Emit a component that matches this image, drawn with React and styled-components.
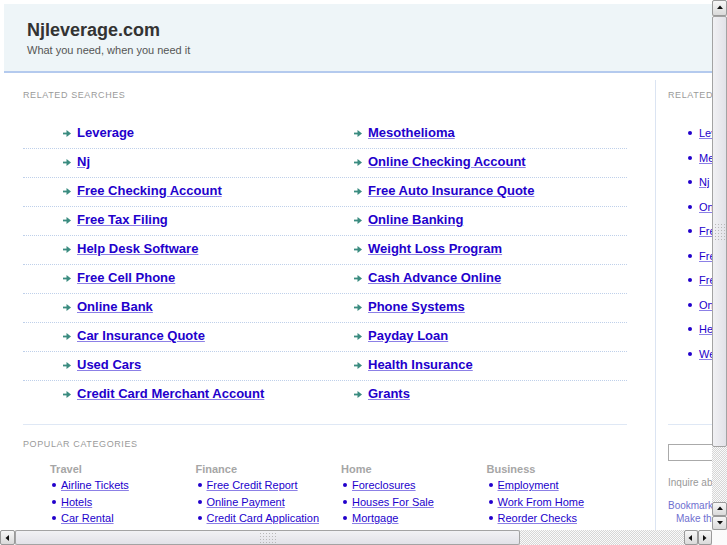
import React from 'react'
import styled, { createGlobalStyle } from 'styled-components'

const Global = createGlobalStyle`
    html, body { margin:0; padding:0; background:#fff; }
    body { font-family:"Liberation Sans", Arial, sans-serif; }
`;

const related = [
    ['Leverage', 'Mesothelioma'],
    ['Nj', 'Online Checking Account'],
    ['Free Checking Account', 'Free Auto Insurance Quote'],
    ['Free Tax Filing', 'Online Banking'],
    ['Help Desk Software', 'Weight Loss Program'],
    ['Free Cell Phone', 'Cash Advance Online'],
    ['Online Bank', 'Phone Systems'],
    ['Car Insurance Quote', 'Payday Loan'],
    ['Used Cars', 'Health Insurance'],
    ['Credit Card Merchant Account', 'Grants'],
];

const sideLinks = ['Leverage', 'Mesothelioma', 'Nj', 'Online Checking Account', 'Free Checking Account',
    'Free Auto Insurance Quote', 'Free Tax Filing', 'Online Banking', 'Help Desk Software', 'Weight Loss Program'];

const categories = [
    { title: 'Travel', links: ['Airline Tickets', 'Hotels', 'Car Rental'] },
    { title: 'Finance', links: ['Free Credit Report', 'Online Payment', 'Credit Card Application'] },
    { title: 'Home', links: ['Foreclosures', 'Houses For Sale', 'Mortgage'] },
    { title: 'Business', links: ['Employment', 'Work From Home', 'Reorder Checks'] },
];

const Frame = styled.div`
    width:727px;
    height:545px;
    display:grid;
    grid-template-columns:712px 15px;
    grid-template-rows:530px 15px;
    overflow:hidden;
`;

const Viewport = styled.div`
    overflow:hidden;
`;

const Page = styled.div`
    width:1000px;
`;

const Header = styled.header`
    margin:4px 0 0 4px;
    height:52px;
    padding:15px 0 0 23px;
    background:#eef5f8;
    border-bottom:2px solid #b4caee;
`;

const Title = styled.h1`
    margin:0;
    font-size:18px;
    line-height:22px;
    font-weight:bold;
    color:#333;
`;

const Tagline = styled.p`
    margin:3px 0 0;
    font-size:11px;
    line-height:13px;
    color:#555;
`;

const Main = styled.div`
    display:flex;
    margin-top:7px;
    padding-left:23px;
`;

const LeftCol = styled.div`
    width:604px;
    flex:none;
`;

const Divider = styled.div`
    margin-left:28px;
    width:0;
    border-left:1px solid #dbe4f2;
    align-self:stretch;
    min-height:460px;
`;

const RightCol = styled.div`
    padding-left:12px;
    width:240px;
`;

const Block = styled.div`
    height:${({ $h }) => $h}px;
    border-bottom:1px solid #dfe8f5;
    padding-top:10px;
    box-sizing:border-box;
`;

const Label = styled.div`
    font-size:9px;
    line-height:11px;
    letter-spacing:0.6px;
    color:#9a9a9a;
    text-transform:uppercase;
`;

const RelatedList = styled.div`
    margin-top:19px;
`;

const Row = styled.div`
    display:grid;
    grid-template-columns:291px 1fr;
    height:29px;
    box-sizing:border-box;
    border-bottom:${({ $last }) => ($last ? 'none' : '1px dotted #bfd0ea')};
`;

const Cell = styled.div`
    display:flex;
    align-items:center;
    height:16px;
    margin-top:5px;
    padding-left:40px;
    gap:6px;
`;

const BigLink = styled.a`
    font-size:13px;
    font-weight:bold;
    line-height:16px;
    color:#2200cc;
    text-decoration:${({ $plain }) => ($plain ? 'none' : 'underline')};
    text-decoration-color:#8c80e6;
    white-space:nowrap;
`;

const SideList = styled.ul`
    list-style:none;
    margin:20px 0 0;
    padding:0 0 0 20px;
`;

const SideItem = styled.li`
    display:flex;
    align-items:center;
    height:24.5px;
    gap:7px;
    white-space:nowrap;
`;

const Dot = styled.span`
    width:4px;
    height:4px;
    border-radius:50%;
    background:#2200cc;
    flex:none;
`;

const SmallLink = styled.a`
    font-size:11px;
    line-height:14px;
    color:#2200cc;
    text-decoration:underline;
    text-decoration-color:#8c80e6;
    white-space:nowrap;
`;

const Popular = styled.div`
    padding-top:14px;
`;

const CatGrid = styled.div`
    display:grid;
    grid-template-columns:repeat(4, 145.5px);
    margin:12px 0 0 27px;
`;

const CatTitle = styled.div`
    font-size:11px;
    font-weight:bold;
    line-height:14px;
    color:#a6a6a6;
    margin-bottom:1px;
`;

const CatItem = styled.div`
    display:flex;
    align-items:center;
    gap:5px;
    height:16.5px;
    padding-left:2px;
`;

const SearchBox = styled.input`
    display:block;
    margin-top:19px;
    width:180px;
    height:17px;
    box-sizing:border-box;
    border:1px solid #aaa;
    padding:0;
`;

const Note = styled.div`
    margin-top:15px;
    font-size:10px;
    line-height:13px;
    color:#999;
    white-space:nowrap;
`;

const Bookmark = styled.div`
    font-size:10px;
    line-height:13px;
    color:#6f6fd0;
    white-space:nowrap;
    padding-left:${({ $indent }) => ($indent ? 8 : 0)}px;
    margin-top:${({ $indent }) => ($indent ? 0 : 10)}px;
`;

/* scrollbars */
const VBar = styled.div`
    display:flex;
    flex-direction:column;
    background:repeating-conic-gradient(#d6d6d6 0 25%, #fafafa 0 50%) 0 0/2px 2px;
`;

const HBar = styled.div`
    display:flex;
    background:repeating-conic-gradient(#d6d6d6 0 25%, #fafafa 0 50%) 0 0/2px 2px;
`;

const Corner = styled.div`
    background:#fbfbfb;
`;

const Btn = styled.div`
    flex:none;
    width:${({ $w }) => $w}px;
    height:${({ $h }) => $h}px;
    box-sizing:border-box;
    border:1px solid #9a9a9a;
    border-radius:2px;
    background:linear-gradient(#f7f7f7, #dadada);
    display:flex;
    align-items:center;
    justify-content:center;
`;

const Thumb = styled.div`
    flex:none;
    box-sizing:border-box;
    border:1px solid #a3a3a3;
    border-radius:2px;
    background:${({ $vertical }) => ($vertical ? 'linear-gradient(90deg, #f1f1f4, #e2e2e8)' : 'linear-gradient(#f1f1f4, #e2e2e8)')};
    width:${({ $w }) => $w};
    height:${({ $h }) => $h};
    display:flex;
    align-items:center;
    justify-content:center;
`;

const Grip = styled.div`
    width:${({ $w }) => $w}px;
    height:${({ $h }) => $h}px;
    background:radial-gradient(circle, #b8b8b8 0.8px, transparent 1px) 0 0/3px 3px;
`;

const Spacer = styled.div`
    flex:1;
`;

const Arrow = ({ dir }) => {
    const pts = {
        up: '1,5 4,1.5 7,5',
        down: '1,2 4,5.5 7,2',
        left: '5,1 1.5,4 5,7',
        right: '2,1 5.5,4 2,7',
    }[dir];
    return (
        <svg width="8" height="8" viewBox="0 0 8 8">
            <polygon points={pts} fill="#111" />
        </svg>
    );
};

const GoArrow = () => (
    <svg width="8" height="7" viewBox="0 0 8 7" style={{ flex: 'none' }}>
        <rect x="0" y="2.6" width="4.5" height="1.8" fill="#3b8c80" />
        <polygon points="3.5,0 8,3.5 3.5,7" fill="#3b8c80" />
    </svg>
);

export default function App() {
    return (
        <Frame>
            <Global />
            <Viewport>
                <Page>
                    <Header>
                        <Title>Njleverage.com</Title>
                        <Tagline>What you need, when you need it</Tagline>
                    </Header>
                    <Main>
                        <LeftCol>
                            <Block $h={345}>
                                <Label>Related Searches</Label>
                                <RelatedList>
                                    {related.map(([a, b], i) =>
                                        <Row key={a} $last={i === related.length - 1}>
                                            <Cell><GoArrow /><BigLink href="#" $plain={i === 0}>{a}</BigLink></Cell>
                                            <Cell><GoArrow /><BigLink href="#">{b}</BigLink></Cell>
                                        </Row>
                                    )}
                                </RelatedList>
                            </Block>
                            <Popular>
                                <Label>Popular Categories</Label>
                                <CatGrid>
                                    {categories.map(cat =>
                                        <div key={cat.title}>
                                            <CatTitle>{cat.title}</CatTitle>
                                            {cat.links.map(l =>
                                                <CatItem key={l}><Dot /><SmallLink href="#">{l}</SmallLink></CatItem>
                                            )}
                                        </div>
                                    )}
                                </CatGrid>
                            </Popular>
                        </LeftCol>
                        <Divider />
                        <RightCol>
                            <Block $h={345}>
                                <Label>Related Searches</Label>
                                <SideList>
                                    {sideLinks.map(l =>
                                        <SideItem key={l}><Dot /><SmallLink href="#">{l}</SmallLink></SideItem>
                                    )}
                                </SideList>
                            </Block>
                            <SearchBox type="text" />
                            <Note>Inquire about this domain</Note>
                            <Bookmark>Bookmark this page</Bookmark>
                            <Bookmark $indent>Make this your homepage</Bookmark>
                        </RightCol>
                    </Main>
                </Page>
            </Viewport>
            <VBar>
                <Btn $w={15} $h={16}><Arrow dir="up" /></Btn>
                <Thumb $vertical $w="15px" $h="431px"><Grip $w={12} $h={18} /></Thumb>
                <Spacer />
                <Btn $w={15} $h={14}><Arrow dir="up" /></Btn>
                <Btn $w={15} $h={14}><Arrow dir="down" /></Btn>
            </VBar>
            <HBar>
                <Btn $w={15} $h={15}><Arrow dir="left" /></Btn>
                <Thumb $w="505px" $h="15px"><Grip $w={18} $h={12} /></Thumb>
                <Spacer />
                <Btn $w={14} $h={15}><Arrow dir="left" /></Btn>
                <Btn $w={14} $h={15}><Arrow dir="right" /></Btn>
            </HBar>
            <Corner />
        </Frame>
    )
}
